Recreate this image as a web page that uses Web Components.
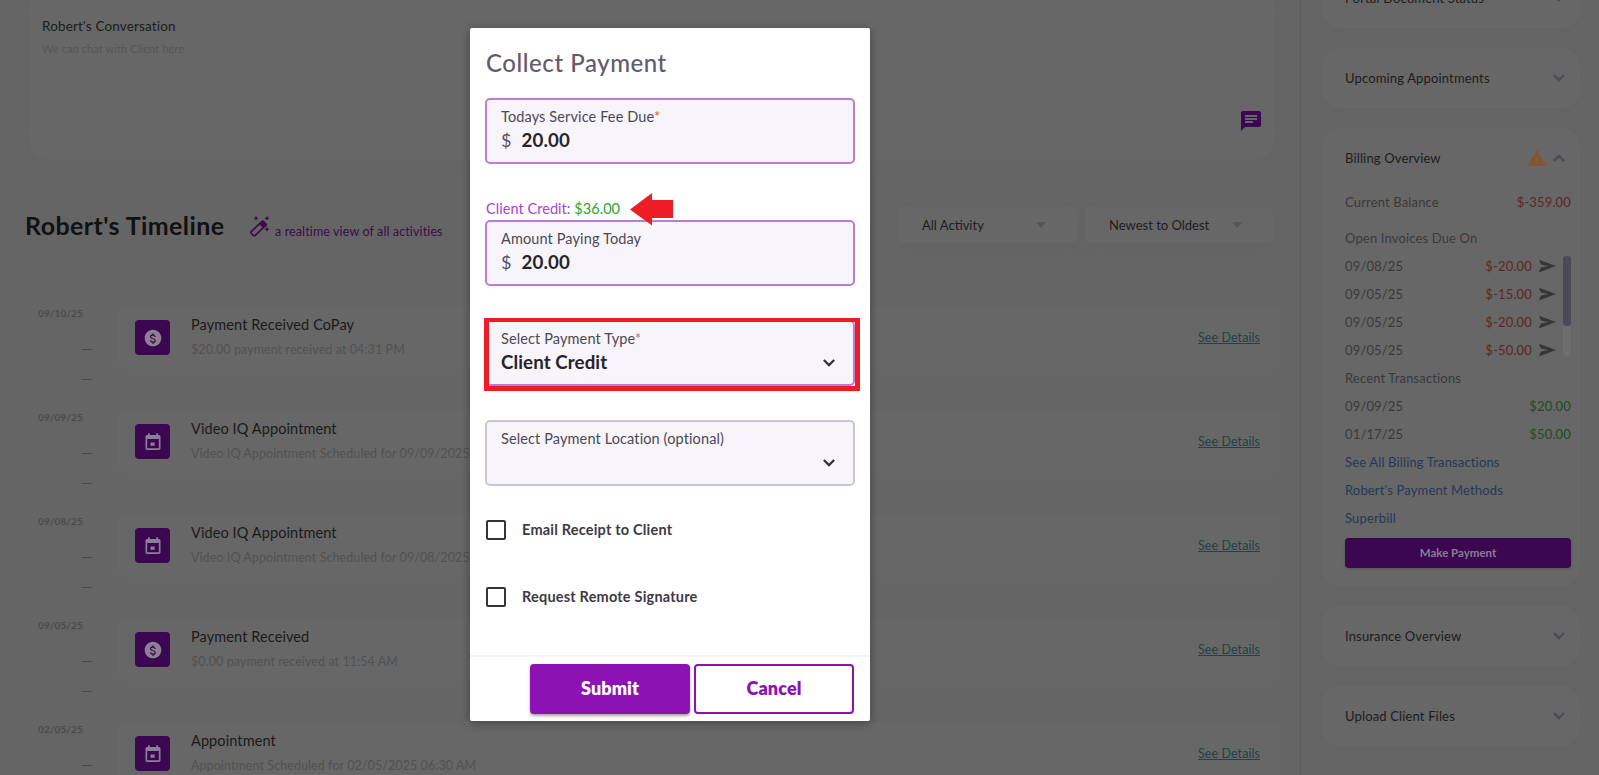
<!DOCTYPE html>
<html lang="en"><head><meta charset="utf-8"><title>Collect Payment</title>
<style>
html,body{margin:0;height:100%;overflow:hidden;background:#656565}
body{font-family:Lato,"Noto Sans",sans-serif;position:relative}
</style></head><body>
<app-shell>
  <section slot="main">
    <conv-card></conv-card>
    <timeline-head></timeline-head>
    <timeline-row date="09/10/25" icon="money" title="Payment Received CoPay" sub="$20.00 payment received at 04:31 PM"></timeline-row>
    <timeline-row date="09/09/25" icon="event" title="Video IQ Appointment" sub="Video IQ Appointment Scheduled for 09/09/2025 06:30 AM"></timeline-row>
    <timeline-row date="09/08/25" icon="event" title="Video IQ Appointment" sub="Video IQ Appointment Scheduled for 09/08/2025 06:30 AM"></timeline-row>
    <timeline-row date="09/05/25" icon="money" title="Payment Received" sub="$0.00 payment received at 11:54 AM"></timeline-row>
    <timeline-row date="02/05/25" icon="event" title="Appointment" sub="Appointment Scheduled for 02/05/2025 06:30 AM"></timeline-row>
  </section>
  <side-panel slot="side"></side-panel>
</app-shell>
<pay-modal></pay-modal>
<script>
const ICONS={
 money:'<svg viewBox="0 0 24 24" width="20" height="20" fill="#8e7f96"><path d="M12 2C6.48 2 2 6.48 2 12s4.48 10 10 10 10-4.48 10-10S17.52 2 12 2zm.9 15.5V19h-1.8v-1.5c-1.5-.3-2.7-1.2-2.8-2.9h1.6c.1.9.8 1.6 2.1 1.6 1.5 0 1.9-.8 1.9-1.3 0-.7-.4-1.3-2.2-1.8-2-.5-3.3-1.3-3.3-3 0-1.4 1.1-2.3 2.7-2.6V6.500h1.800V8c1.500.4 2.300 1.500 2.300 2.800h-1.600c0-.9-.5-1.500-1.800-1.500-1.200 0-2 .5-2 1.300 0 .7.5 1.100 2.200 1.600s3.400 1.100 3.400 3.200c0 1.500-1.100 2.300-2.500 2.600z"/></svg>',
 event:'<svg viewBox="0 0 24 24" width="20" height="20" fill="#8e7f96"><path d="M14 12H9v4h5v-4zM16 1v2H8V1H6v2H5c-1.110 0-1.990.9-1.990 2L3 19c0 1.100.89 2 2 2h14c1.100 0 2-.9 2-2V5c0-1.100-.9-2-2-2h-1V1h-2zm3 18H5V8h14v11z" transform="translate(0 .5)"/></svg>',
 chevDown:'<svg viewBox="0 0 14 9" width="12" height="8" fill="none" stroke="currentColor" stroke-width="2.700"><path d="M1 1l6 6 6-6"/></svg>',
 chevUp:'<svg viewBox="0 0 14 9" width="12" height="8" fill="none" stroke="currentColor" stroke-width="2.700"><path d="M1 8l6-6 6 6"/></svg>'
};
function def(name,html){
  customElements.define(name,class extends HTMLElement{
    connectedCallback(){
      if(this.shadowRoot)return;
      const s=this.attachShadow({mode:'open'});
      s.innerHTML=typeof html==='function'?html(this):html;
    }
  });
}
def('app-shell',`<style>
:host{display:grid;grid-template-columns:1301px 298px;height:775px;overflow:hidden}
.m{border-right:1px solid #5c5c5c;min-width:0;overflow:hidden;height:775px}
.s{min-width:0;overflow:hidden;height:775px}
</style><div class="m"><slot name="main"></slot></div><div class="s"><slot name="side"></slot></div>`);
def('conv-card',`<style>
:host{display:block;box-sizing:border-box;margin-left:29px;width:1246px;height:160px;background:#676767;border-radius:4px 4px 20px 20px;box-shadow:0 0 14px #646464;padding:18px 13px;position:relative;color:#1c1c1c}
h3{margin:0;font:400 13.500px Lato,sans-serif;line-height:17px;letter-spacing:.15px}
p{margin:7px 0 0;font:400 11px Lato,sans-serif;line-height:14px;color:#565656;letter-spacing:.1px}
.b{position:absolute;right:12px;bottom:27px;width:24px;height:24px}
</style><h3>Robert's Conversation</h3><p>We can chat with Client here</p>
<svg class="b" viewBox="0 0 24 24" fill="#3a0750"><path d="M20 2H4c-1.100 0-1.990.9-1.990 2L2 22l4-4h14c1.100 0 2-.9 2-2V4c0-1.100-.9-2-2-2zM6 9h12v2H6V9zm8 5H6v-2h8v2zm4-6H6V6h12v2z"/></svg>`);
def('timeline-head',`<style>
:host{display:flex;align-items:center;height:36px;margin:47px 0 63px;padding:0 27px 0 25px;color:#111}
h2{margin:0;font:700 25px Lato,sans-serif;letter-spacing:.4px;width:224px;white-space:nowrap}
.w{display:flex;align-items:flex-end;flex:1;gap:4px;height:24px}
.w span{font:400 12.500px Lato,sans-serif;color:#3e0a4c;line-height:15px;letter-spacing:.12px;position:relative;top:2px}
.d{display:flex;align-items:center;justify-content:space-between;box-sizing:border-box;height:36px;background:#676767;border-radius:4px;font:400 13px Lato,sans-serif;color:#1c1c1c;padding:0 30px 0 24px;box-shadow:0 8px 12px #646464}
.a{width:179px;margin-right:8px}.b{width:188px}
i{width:0;height:0;border:5px solid transparent;border-top:6px solid #55545a;border-bottom:0;margin-right:1px}
</style><h2>Robert's Timeline</h2>
<div class="w"><svg width="22" height="22" viewBox="0 0 22 22" fill="#3e0a4c" style="flex:none"><g transform="rotate(-43 9.500 13.500)"><rect x="1" y="10.800" width="17" height="5.400" rx="1" fill="none" stroke="#3e0a4c" stroke-width="1.700"/><rect x="13" y="10.800" width="5" height="5.400"/></g><path d="M7 .5l.8 1.900 1.900.8-1.900.8L7 5.900l-.8-1.900-1.900-.8 1.900-.8zM18 .5l.8 1.900 1.900.8-1.900.8-.8 1.900-.8-1.900-1.900-.8 1.900-.8zM18 11.500l.8 1.900 1.900.8-1.900.8-.8 1.900-.8-1.900-1.900-.8 1.900-.8z"/></svg><span>a realtime view of all activities</span></div>
<div class="d a">All Activity<i></i></div><div class="d b">Newest to Oldest<i></i></div>`);
def('timeline-row',el=>`<style>
:host{display:grid;grid-template-columns:89px 1162px;height:102px;margin:0 0 2px 29px}
.l{display:flex;flex-direction:column;font:700 10px Lato,sans-serif;color:#4c4c4c}
.dt{line-height:14px;margin:0 0 0 9px;height:43px;letter-spacing:.1px}
.dash{width:10px;height:1px;background:#4a4a4a;margin:0 0 29px 53px}
.c{box-sizing:border-box;height:63px;background:#676767;border-radius:8px;display:flex;align-items:center;padding:0 20px 0 17px;position:relative}
.i{width:35px;height:35px;border-radius:4px;background:#3a0750;display:flex;align-items:center;justify-content:center;flex:none;margin-right:21px}
.t{flex:1;margin-top:-1px}
.h{font:400 14.500px Lato,sans-serif;line-height:18px;color:#1a1a1a;letter-spacing:.1px}
.s{font:400 12.500px Lato,sans-serif;line-height:16px;margin-top:8px;color:#525252;letter-spacing:.08px}
a{font:400 12.500px Lato,sans-serif;color:#284040;text-decoration:underline;letter-spacing:.07px}
</style>
<div class="l"><div class="dt">${el.getAttribute('date')}</div><div class="dash"></div><div class="dash"></div></div>
<div class="c"><div class="i">${ICONS[el.getAttribute('icon')]}</div><div class="t"><div class="h">${el.getAttribute('title')}</div><div class="s">${el.getAttribute('sub')}</div></div><a>See Details</a></div>`);
function inv(d,a){return `<div class="r"><span>${d}</span><b class="red">${a}</b><svg class="snd" viewBox="0 0 24 24" width="18" height="18" fill="#363636"><path d="M1 20.500L24 12 1 3.500 4 10l10 2-10 2z"/></svg></div>`}
def('side-panel',`<style>
:host{display:flex;flex-direction:column;gap:20px;margin:-32px 0 0 21px;width:258px;color:#1c1c1c;font:400 13px Lato,sans-serif}
.c{background:#676767;border-radius:18px;box-shadow:0 0 8px #646464;box-sizing:border-box;padding:0 9px 0 23px}
.hd{height:60px;display:flex;align-items:center;font-size:13px;letter-spacing:.15px}
.hd span{flex:1}
.ch{color:#4c4c54;width:12px;margin-right:6px;display:flex}
.r{display:flex;align-items:center;height:28px;color:#3a3a3a;letter-spacing:.15px}
.r span{flex:1}
.red{color:#5e2626;font-weight:400}.grn{color:#244a24;font-weight:400}
.snd{margin-left:6px;flex:none}
.sc{display:flex}.sc .list{flex:1;padding-right:7px}
.bar{width:8px;margin-top:4px;height:100px;background:#6e6e6e;border-radius:3px;position:relative;flex:none}
.bar i{display:block;height:70px;background:#4a4a52;border-radius:3px}
.lnk{color:#26385a}
.gap{margin-top:8px}
.pay{display:flex;align-items:center;justify-content:center;height:30px;margin:6px 0 18px;background:#3a0750;border-radius:4px;color:#8d7d95;font-weight:700;font-size:11.500px;box-shadow:0 1px 3px #555;padding-bottom:2px;box-sizing:border-box}
</style>
<div class="c"><div class="hd"><span>Portal Document Status</span><div class="ch">${ICONS.chevDown}</div></div></div>
<div class="c"><div class="hd"><span>Upcoming Appointments</span><div class="ch">${ICONS.chevDown}</div></div></div>
<div class="c"><div class="hd"><span>Billing Overview</span><svg width="18" height="16" viewBox="2 2 20 18" fill="#86542e" style="margin-right:7px"><path d="M1 21h22L12 2 1 21zm12-3h-2v-2h2v2zm0-4h-2v-4h2v4z" fill-rule="evenodd"/></svg><div class="ch">${ICONS.chevUp}</div></div>
<div class="r"><span>Current Balance</span><b class="red">$-359.00</b></div>
<div class="r gap"><span>Open Invoices Due On</span></div>
<div class="sc"><div class="list">${inv('09/08/25','$-20.00')}${inv('09/05/25','$-15.00')}${inv('09/05/25','$-20.00')}${inv('09/05/25','$-50.00')}</div><div class="bar"><i></i></div></div>
<div class="r"><span>Recent Transactions</span></div>
<div class="r"><span>09/09/25</span><b class="grn">$20.00</b></div>
<div class="r"><span>01/17/25</span><b class="grn">$50.00</b></div>
<div class="r lnk">See All Billing Transactions</div>
<div class="r lnk">Robert's Payment Methods</div>
<div class="r lnk">Superbill</div>
<div class="pay">Make Payment</div></div>
<div class="c"><div class="hd"><span>Insurance Overview</span><div class="ch">${ICONS.chevDown}</div></div></div>
<div class="c"><div class="hd"><span>Upload Client Files</span><div class="ch">${ICONS.chevDown}</div></div></div>`);
def('pay-field',el=>{
 const v=el.getAttribute('value')||'',pre=el.hasAttribute('money'),sel=el.hasAttribute('select'),req=el.hasAttribute('required');
 return `<style>
:host{display:block;flex:none;box-sizing:border-box;height:66px;width:370px;background:#f7f5fa;border:2px solid ${el.hasAttribute('muted')?'#cbc6d2':'#bb7bdc'};border-radius:5px;padding:7px 14px 0;position:relative}
.l{font:400 14.500px Lato,sans-serif;color:#4c4856;line-height:20px;letter-spacing:.12px}
.l em{color:#e8553a;font-style:normal}
.v{display:flex;align-items:center;height:26px;font:700 18.700px Lato,sans-serif;color:#25232b;letter-spacing:.1px}
.p{font-weight:400;color:#55525c;margin-right:10px;font-size:18px}
svg{position:absolute;right:18px;bottom:17px;color:#33303a}
</style><div class="l">${el.getAttribute('label')}${req?'<em>*</em>':''}</div><div class="v">${pre?'<span class="p">$</span>':''}${v}</div>${sel?ICONS.chevDown:''}`});
def('pay-check',el=>`<style>
:host{display:flex;flex:none;align-items:center;gap:16px;height:20px;font:700 14.500px Lato,sans-serif;color:#3d3a44;letter-spacing:.2px}
i{box-sizing:border-box;width:20px;height:20px;border:2px solid #37343d;border-radius:2px;flex:none}
span{position:relative;top:-1px}
</style><i></i><span>${el.getAttribute('label')}</span>`);
def('pay-modal',`<style>
:host{position:absolute;left:470px;top:28px;box-sizing:border-box;width:400px;height:693px;background:#fff;box-shadow:0 2px 10px rgba(0,0,0,.35);border-radius:2px;display:flex;flex-direction:column}
h1{margin:19px 0 0 16px;font:500 24px Lato,sans-serif;line-height:32px;color:#635a6e;letter-spacing:.55px}
.b{padding:0 15px;flex:1;display:flex;flex-direction:column;align-items:flex-start;position:relative}
.cr{margin:36px 0 2px 1px;font:400 14.500px Lato,sans-serif;line-height:18px;color:#a93fd3;letter-spacing:.05px}
.cr b{font-weight:400;color:#2fa52f}
.f{display:flex;justify-content:flex-end;align-items:flex-start;gap:4px;height:66px;border-top:2px solid #f5f5f5;box-sizing:border-box;padding:7px 16px 0}
button{box-sizing:border-box;width:160px;height:50px;border-radius:4px;font:800 18px Lato,sans-serif;letter-spacing:.1px;padding:0 0 2px}
.s{background:#8c12b4;color:#fff;border:0;box-shadow:0 2px 3px rgba(0,0,0,.35)}
.n{background:#fff;color:#8c12b4;border:2px solid #8c12b4}
.ar{position:absolute;left:160px;top:114px}
.box{position:absolute;left:14px;top:239px;width:376px;height:73px;box-sizing:border-box;border:5px solid #ee1c25;border-top-width:4px;pointer-events:none}
</style>
<h1>Collect Payment</h1>
<div class="b">
 <pay-field style="margin-top:19px" label="Todays Service Fee Due" required money value="20.00"></pay-field>
 <div class="cr">Client Credit: <b>$36.00</b></div>
 <pay-field label="Amount Paying Today" money value="20.00"></pay-field>
 <pay-field style="margin-top:34px" label="Select Payment Type" required select value="Client Credit"></pay-field>
 <pay-field style="margin-top:34px" muted label="Select Payment Location (optional)" select></pay-field>
 <pay-check style="margin-top:34px;margin-left:1px" label="Email Receipt to Client"></pay-check>
 <pay-check style="margin-top:47px;margin-left:1px" label="Request Remote Signature"></pay-check>
 <svg class="ar" width="44" height="33" viewBox="0 0 44 33"><path d="M0 16.500L22 0v7h21v18H22v7.500z" fill="#ee1c25"/></svg>
 <div class="box"></div>
</div>
<div class="f"><button class="s">Submit</button><button class="n">Cancel</button></div>`);
</script>
</body></html>
